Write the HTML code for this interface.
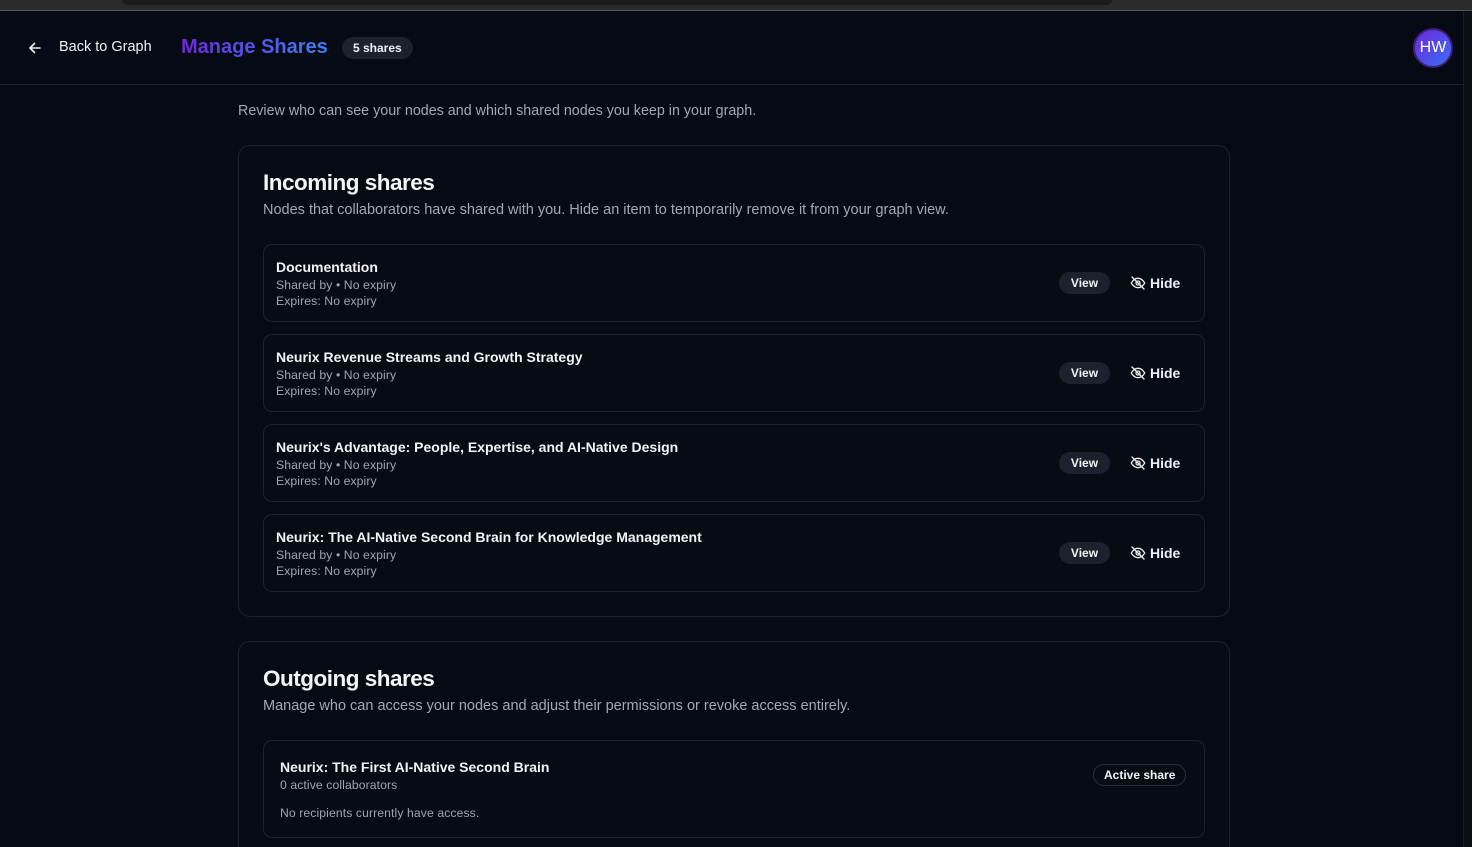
<!DOCTYPE html>
<html><head><meta charset="utf-8"><style>
*{box-sizing:border-box;margin:0;padding:0}
html{width:1472px;height:847px;overflow:hidden}
body{width:1472px;height:847px;overflow:hidden;background:#050a14;font-family:"Liberation Sans",sans-serif;color:#f1f3f6;position:relative}
.top{position:absolute;left:0;top:0;width:1472px;height:11px;background:#2b2b2d;border-bottom:1px solid #555}
.top .pill{position:absolute;left:122px;top:0;width:990px;height:5px;background:#1c1c1e;border-radius:0 0 10px 10px}
.sb{position:absolute;right:0;top:11px;width:9px;height:836px;background:#0b0e15;border-left:1px solid #1a1d24}
.hdr{position:absolute;left:0;top:12px;width:1463px;height:73px;border-bottom:1px solid #1b212c}
.back{position:absolute;left:59px;top:27px;font-size:14.5px;color:#f2f2f2}
.arrow{position:absolute;left:27px;top:28px}
.title{position:absolute;left:181px;top:24px;font-size:20px;font-weight:bold;background:linear-gradient(90deg,#6d28d9,#3b82f6);-webkit-background-clip:text;color:transparent}
.badge{position:absolute;left:342px;top:25px;height:22px;padding:0 11px;border-radius:11px;background:#1c222d;font-size:12px;font-weight:bold;line-height:22px;color:#eef}
.av{position:absolute;left:1413px;top:16px;width:40px;height:40px;border-radius:50%;background:linear-gradient(135deg,#6d28d9,#3b6ef6);border:2px solid #3b1f73;font-size:16px;color:#fff;text-align:center;line-height:36px}
.intro{position:absolute;left:238px;top:103px;font-size:14.3px;color:#a3a8b2}
.card{position:absolute;left:238px;width:992px;border:1px solid #1c222c;border-radius:12px;background:#060a13}
.card h2{position:absolute;left:24px;font-size:22.5px;font-weight:bold;letter-spacing:-0.5px;color:#f5f5f7}
.card .sub{position:absolute;left:24px;font-size:14.5px;color:#a3a8b2}
.item{position:absolute;left:24px;width:942px;height:78px;border:1px solid #1c222c;border-radius:9px;background:#070b14}
.item .n{position:absolute;left:12px;top:14px;font-size:14px;font-weight:bold;color:#f2f3f5}
.item .m{position:absolute;left:12px;font-size:12.2px;color:#a0a5ae;letter-spacing:0.1px}
.view{position:absolute;left:795px;top:27px;height:22px;width:51px;border-radius:11px;background:#1c222d;font-size:12px;font-weight:bold;line-height:22px;text-align:center}
.hide{position:absolute;left:866px;top:30px;font-size:14px;font-weight:bold;color:#eef}
.hide svg{vertical-align:-3px;margin-right:4px}
</style></head><body>
<div class="top"><div class="pill"></div></div>
<div class="sb"></div>
<div class="hdr">
<svg class="arrow" width="16" height="16" viewBox="0 0 16 16" fill="none" stroke="#eee" stroke-width="1.6" stroke-linecap="round" stroke-linejoin="round"><path d="M13 8H3M7.5 3.5L3 8l4.5 4.5"/></svg>
<div class="back">Back to Graph</div>
<div class="title">Manage Shares</div>
<div class="badge">5 shares</div>
<div class="av">HW</div>
</div>
<div class="intro">Review who can see your nodes and which shared nodes you keep in your graph.</div>

<div class="card" style="top:145px;height:472px">
<h2 style="top:24px">Incoming shares</h2>
<div class="sub" style="top:56px">Nodes that collaborators have shared with you. Hide an item to temporarily remove it from your graph view.</div>
<div class="item" style="top:98px"><div class="n">Documentation</div><div class="m" style="top:33px">Shared by • No expiry</div><div class="m" style="top:49px">Expires: No expiry</div><div class="view">View</div><div class="hide"><svg width="16" height="16" viewBox="0 0 24 24" fill="none" stroke="#eee" stroke-width="2" stroke-linecap="round"><path d="M2 12s3.5-7 10-7 10 7 10 7-3.5 7-10 7S2 12 2 12z"/><circle cx="12" cy="12" r="3"/><path d="M3 3l18 18"/></svg>Hide</div></div>
<div class="item" style="top:188px"><div class="n">Neurix Revenue Streams and Growth Strategy</div><div class="m" style="top:33px">Shared by • No expiry</div><div class="m" style="top:49px">Expires: No expiry</div><div class="view">View</div><div class="hide"><svg width="16" height="16" viewBox="0 0 24 24" fill="none" stroke="#eee" stroke-width="2" stroke-linecap="round"><path d="M2 12s3.5-7 10-7 10 7 10 7-3.5 7-10 7S2 12 2 12z"/><circle cx="12" cy="12" r="3"/><path d="M3 3l18 18"/></svg>Hide</div></div>
<div class="item" style="top:278px"><div class="n">Neurix's Advantage: People, Expertise, and AI-Native Design</div><div class="m" style="top:33px">Shared by • No expiry</div><div class="m" style="top:49px">Expires: No expiry</div><div class="view">View</div><div class="hide"><svg width="16" height="16" viewBox="0 0 24 24" fill="none" stroke="#eee" stroke-width="2" stroke-linecap="round"><path d="M2 12s3.5-7 10-7 10 7 10 7-3.5 7-10 7S2 12 2 12z"/><circle cx="12" cy="12" r="3"/><path d="M3 3l18 18"/></svg>Hide</div></div>
<div class="item" style="top:368px"><div class="n">Neurix: The AI-Native Second Brain for Knowledge Management</div><div class="m" style="top:33px">Shared by • No expiry</div><div class="m" style="top:49px">Expires: No expiry</div><div class="view">View</div><div class="hide"><svg width="16" height="16" viewBox="0 0 24 24" fill="none" stroke="#eee" stroke-width="2" stroke-linecap="round"><path d="M2 12s3.5-7 10-7 10 7 10 7-3.5 7-10 7S2 12 2 12z"/><circle cx="12" cy="12" r="3"/><path d="M3 3l18 18"/></svg>Hide</div></div>
</div>

<div class="card" style="top:641px;height:230px">
<h2 style="top:24px">Outgoing shares</h2>
<div class="sub" style="top:56px">Manage who can access your nodes and adjust their permissions or revoke access entirely.</div>
<div class="item" style="top:98px;height:98px"><div class="n" style="left:16px;top:18px">Neurix: The First AI-Native Second Brain</div><div class="m" style="left:16px;top:37px">0 active collaborators</div><div class="m" style="left:16px;top:65px">No recipients currently have access.</div>
<div style="position:absolute;left:829px;top:23px;height:22px;padding:0 10px;border:1px solid #2a303b;border-radius:11px;font-size:12px;font-weight:bold;line-height:20px">Active share</div></div>
</div>
</body></html>
